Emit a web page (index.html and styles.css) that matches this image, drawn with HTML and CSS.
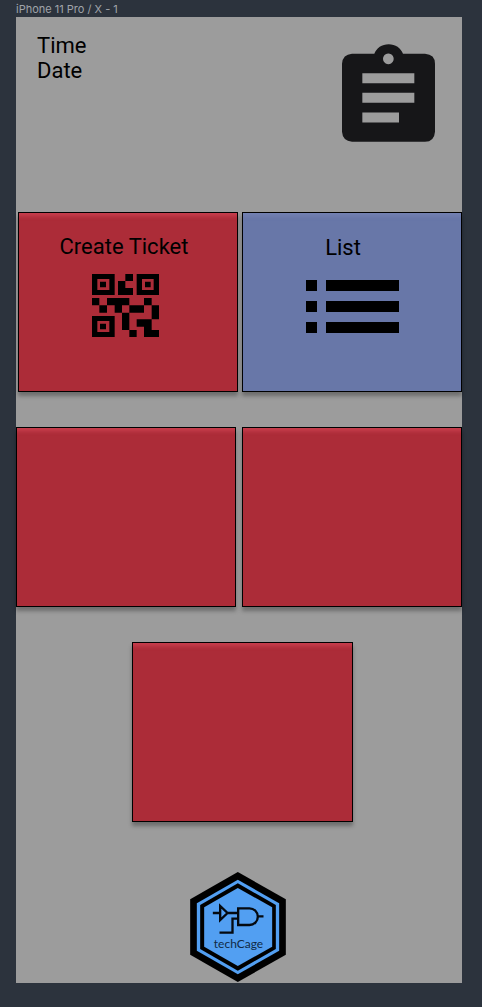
FILE: index.html
```html
<!DOCTYPE html>
<html lang="en">
<head>
<meta charset="utf-8">
<meta name="viewport" content="width=device-width, initial-scale=1">
<title>techCage</title>
<link rel="stylesheet" href="styles.css">
</head>
<body>
<div class="frame-label">iPhone 11 Pro / X - 1</div>
<main class="screen">
  <header class="header">
    <div class="clock"><div>Time</div><div>Date</div></div>
    <svg class="clipboard" viewBox="50 43 279 293" aria-hidden="true">
      <path fill="#161618" fill-rule="evenodd" d="M80 72H147C153 54 170 43 190 43S227 54 233 72H299Q329 74 329 102V306Q327 336 299 336H80Q52 334 50 306V102Q52 74 80 72ZM189 71a16 16 0 1 0 .1 0ZM111 130V160H267V130ZM111 189V219H267V189ZM111 248V278H221V248Z"/>
    </svg>
  </header>
  <div class="row row-first">
    <button class="tile" type="button">
      <span>Create Ticket</span>
      <svg class="qr" viewBox="36 27 201 189" aria-hidden="true">
        <path fill-rule="evenodd" d="M36 27H104V90H36ZM52 42V75H88V42ZM60 50H78V67H60ZM170 27H237V90H170ZM186 42V75H221V42ZM195 50H212V67H195ZM36 153H104V216H36ZM52 168V201H88V168ZM60 176H78V193H60Z"/>
        <path d="M136 27H159V48H136ZM114 48H136V69H159V90H114ZM36 99H58V121H36ZM58 121H81V143H58ZM81 99H148V121H126V143H104V121H81ZM148 121H192V143H148ZM192 99H215V121H192ZM215 121H237V163H215ZM126 143H148V195H126ZM148 195H170V216H148ZM170 163H215V195H237V216H192V185H170Z"/>
      </svg>
    </button>
    <button class="tile tile-blue" type="button">
      <span class="list-label">List</span>
      <svg class="list" viewBox="0 0 93 53" aria-hidden="true">
        <path d="M0 0H11V11H0ZM20 0H93V11H20ZM0 21H11V32H0ZM20 21H93V32H20ZM0 42H11V53H0ZM20 42H93V53H20Z"/>
      </svg>
    </button>
  </div>
  <div class="row row-second">
    <button class="tile" type="button" aria-label="Empty tile"></button>
    <button class="tile" type="button" aria-label="Empty tile"></button>
  </div>
  <div class="row-last">
    <button class="tile tile-single" type="button" aria-label="Empty tile"></button>
  </div>
  <footer class="footer">
    <svg class="logo" viewBox="31 21 287 330" role="img" aria-label="techCage">
      <path d="M174 21L318 103V269L174 351L31 269V103Z"/>
      <path fill="#529ff2" d="M174 44L298 115V257L174 328L51 257V115Z"/>
      <path d="M174 55L288 120V252L174 317L61 252V120Z"/>
      <path fill="#529ff2" d="M174 69L277 127V245L174 303L73 245V127Z"/>
      <path fill="none" stroke="#050a10" stroke-width="7" d="M99 144H121M121 123V165L143 144ZM143 144H174M119 203H158V161H174M175 130H209A25 25 0 0 1 209 180H175ZM235 154H251"/>
      <text class="logo-text" x="176" y="248" text-anchor="middle">techCage</text>
    </svg>
  </footer>
</main>
</body>
</html>
```
FILE: styles.css
```css
* {
  box-sizing: border-box;
}

body {
  margin: 0;
  padding: 0 20px 24px 16px;
  background: #2c333d;
  font-family: Roboto, "Liberation Sans", sans-serif;
  color: #000;
}

.frame-label {
  height: 17px;
  font: 11px/18px Inter, sans-serif;
  color: #a0a4aa;
}

.screen {
  background: #9c9c9c;
}

.header {
  display: flex;
  justify-content: space-between;
  align-items: flex-start;
  min-height: 195px;
  padding: 16px 27px 0 21px;
}

.clock {
  font-size: 22px;
  line-height: 25px;
}

.clipboard {
  width: 93px;
  height: 98px;
  margin-top: 11px;
}

.row {
  display: grid;
  grid-template-columns: 1fr 1fr;
  margin-bottom: 35px;
}

.row-first {
  gap: 4px;
  padding-left: 2px;
}

.row-second {
  gap: 6px;
}

.row-last {
  display: flex;
  justify-content: center;
  padding-left: 7px;
}

.tile {
  display: flex;
  flex-direction: column;
  align-items: center;
  justify-content: flex-start;
  min-height: 180px;
  padding: 21px 8px 8px;
  border: 1px solid #000;
  border-radius: 0;
  background: #ac2c38;
  box-shadow: 0 4px 4px rgba(0, 0, 0, 0.3), inset 0 7px 4px -4px rgba(255, 100, 120, 0.35);
  color: #000;
  font: 22px/25px Roboto, "Liberation Sans", sans-serif;
}

.tile > span {
  margin-right: 8px;
}

.tile-blue {
  padding-top: 22px;
  background: #6877a8;
  box-shadow: 0 4px 4px rgba(0, 0, 0, 0.3), inset 0 7px 4px -4px rgba(140, 150, 200, 0.35);
}

.tile .list-label {
  margin-right: 18px;
}

.tile-single {
  width: 221px;
}

.qr {
  width: 67px;
  height: 63px;
  margin: 15px 5px 0 0;
}

.list {
  width: 93px;
  height: 53px;
  margin: 20px 0 0 1px;
}

.footer {
  display: flex;
  justify-content: center;
  padding: 50px 2px 1px 0;
}

.logo {
  width: 96px;
  height: 110px;
}

.logo-text {
  font: 36px Lato, "Liberation Sans", sans-serif;
  fill: #102a45;
}
```
